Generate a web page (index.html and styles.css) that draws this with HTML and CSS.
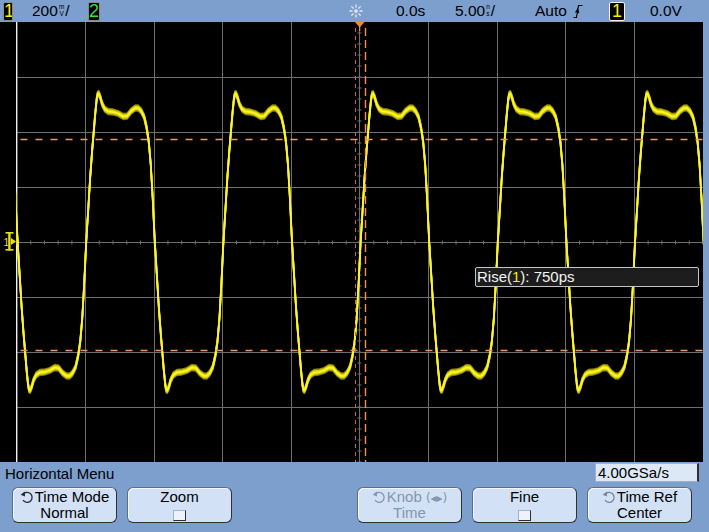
FILE: index.html
```html
<!DOCTYPE html>
<html lang="en">
<head>
<meta charset="utf-8">
<title>Horizontal Menu</title>
<link rel="stylesheet" href="styles.css">
</head>
<body>
<div class="scope">
  <header class="status">
    <div class="cell"><span class="chan chan-1">1</span></div>
    <div class="cell"><span class="val">200<span class="unit"><span>m</span><span>V</span></span>/</span></div>
    <div class="cell"><span class="chan chan-2">2</span></div>
    <div class="cell">
      <svg class="run-icon" width="14" height="16" viewBox="0 0 14 16">
        <path d="M7 1.5V4.5M7 11.5V14.5M0.5 8H3.5M10.5 8H13.5M2.4 3.4L4.5 5.5M9.5 10.5L11.6 12.6M11.6 3.4L9.5 5.5M4.5 10.5L2.4 12.6" />
        <circle cx="7" cy="8" r="1.2" />
      </svg>
    </div>
    <div class="cell"><span class="val">0.0s</span></div>
    <div class="cell"><span class="val">5.00<span class="unit"><span>n</span><span>s</span></span>/</span></div>
    <div class="cell"><span class="val">Auto</span></div>
    <div class="cell">
      <svg class="slope-icon" width="10" height="15" viewBox="0 0 10 15">
        <path d="M0.5 13.5H3.5L5.5 1.5H9.5" />
        <path d="M2.6 8.6L4.6 5.4L5.8 9" />
      </svg>
    </div>
    <div class="cell"><span class="chan chan-1 chan-sel">1</span></div>
    <div class="cell"><span class="val">0.0V</span></div>
  </header>

  <div class="middle">
    <div class="gutter">
      <svg class="gnd-marker" width="16" height="20" viewBox="0 0 16 20">
        <rect x="5.5" y="0" width="8" height="1.6" />
        <rect x="8.2" y="0" width="2.4" height="18.5" />
        <rect x="5.5" y="17" width="8" height="1.6" />
        <text x="3.6" y="14.2">1</text>
        <path d="M11 6L16 9.5L11 13Z" />
      </svg>
    </div>

    <div class="screen">
      <svg class="grid" width="687" height="440" viewBox="0 0 687 440">
        <defs>
          <polyline id="period" points="0,220 2,252 4,285 6,312 7.5,330 9,348 10.5,363 11.5,368 12.5,368.5 14,365 16,358 18.5,353 22,350.5 27,350 32,348.5 37,345.5 41,346 45,351 49,354 52,354 55,351 58,345 60.5,334 62.6,320 64.6,297 66.6,262 68.6,220 70.6,188 72.6,155 74.6,128 76.1,110 77.6,92 79.1,77 80.1,72 81.1,71.5 82.6,75 84.6,82 87.1,87 90.6,89.5 95.6,90 100.6,91.5 105.6,94.5 109.6,94 113.6,89 117.6,86 120.6,86 123.6,89 126.6,95 129.1,106 131.2,120 133.2,143 135.2,178 137.2,220" />
          <g id="trace">
            <use href="#period" x="-135.6" />
            <use href="#period" x="1.6" />
            <use href="#period" x="138.8" />
            <use href="#period" x="276" />
            <use href="#period" x="413.2" />
            <use href="#period" x="550.4" />
          </g>
        </defs>

        <path class="gridline" d="M69.5 0V440M138.5 0V440M206.5 0V440M275.5 0V440M343.5 0V440M412.5 0V440M481.5 0V440M549.5 0V440M618.5 0V440M1 55.5H687M1 110.5H687M1 165.5H687M1 220.5H687M1 275.5H687M1 330.5H687M1 385.5H687" />
        <line class="ticks-h" x1="0.5" y1="220.5" x2="687" y2="220.5" />
        <line class="ticks-v" x1="343.5" y1="-0.5" x2="343.5" y2="440" />
        <rect class="edge" x="0" y="0" width="1.4" height="440" />

        <use class="tr tr-3" href="#trace" y="-3" />
        <use class="tr tr-3" href="#trace" y="3" />
        <use class="tr tr-2" href="#trace" y="-2" />
        <use class="tr tr-2" href="#trace" y="2" />
        <use class="tr tr-1" href="#trace" y="-1" />
        <use class="tr tr-1" href="#trace" y="1" />
        <use class="tr tr-0" href="#trace" />

        <line class="lvl" x1="4.5" y1="117.5" x2="687" y2="117.5" />
        <line class="lvl" x1="4.5" y1="328.5" x2="687" y2="328.5" />
        <line class="tmark-a" x1="339.5" y1="6" x2="339.5" y2="440" />
        <line class="tmark-b" x1="349.5" y1="6" x2="349.5" y2="440" />
        <path class="trig" d="M339 0H348.5L343.7 5.5Z" />
        <line class="trig-stem" x1="343.7" y1="4" x2="343.7" y2="9" />
      </svg>

      <div class="readout">Rise(<span class="c1">1</span>): 750ps</div>
    </div>

    <div class="frame-right"></div>
  </div>

  <footer class="menu">
    <div class="menu-head">
      <span class="menu-title">Horizontal Menu</span>
      <span class="rate">4.00GSa/s</span>
    </div>
    <div class="buttons">
      <div class="softkey">
        <span class="line"><svg class="knob knob-active" width="14" height="14" viewBox="0 0 14 14"><path d="M3.2 4.2A5 5 0 1 1 3 10.2" /><path class="head" d="M0.6 4.8L4.8 1.6L5 6.4Z" /></svg>Time Mode</span>
        <span class="line">Normal</span>
      </div>
      <div class="softkey">
        <span class="line">Zoom</span>
        <span class="check"></span>
      </div>
      <div class="slot"></div>
      <div class="softkey softkey-off">
        <span class="line"><svg class="knob" width="14" height="14" viewBox="0 0 14 14"><path d="M3.2 4.2A5 5 0 1 1 3 10.2" /><path class="head" d="M0.6 4.8L4.8 1.6L5 6.4Z" /></svg>Knob <span class="arrows">(◂▸)</span></span>
        <span class="line">Time</span>
      </div>
      <div class="softkey">
        <span class="line">Fine</span>
        <span class="check"></span>
      </div>
      <div class="softkey">
        <span class="line"><svg class="knob knob-dim" width="14" height="14" viewBox="0 0 14 14"><path d="M3.2 4.2A5 5 0 1 1 3 10.2" /><path class="head" d="M0.6 4.8L4.8 1.6L5 6.4Z" /></svg>Time Ref</span>
        <span class="line">Center</span>
      </div>
    </div>
  </footer>
</div>
</body>
</html>
```

FILE: styles.css
```css
* {
  box-sizing: border-box;
}

html,
body {
  margin: 0;
  padding: 0;
}

body {
  width: 709px;
  height: 532px;
  overflow: hidden;
  background: #000;
  font-family: "Liberation Sans", Arial, sans-serif;
  color: #000;
}

.scope {
  display: flex;
  flex-direction: column;
  width: 709px;
  height: 532px;
}

/* ---------- status bar ---------- */
.status {
  height: 22px;
  background: #7c9fce;
  display: grid;
  grid-template-columns: 29px 56px 261px 47px 59px 80px 38px 36px 41px 1fr;
  padding-left: 3px;
  font-size: 15.5px;
  line-height: 22px;
}

.cell {
  display: flex;
  align-items: center;
  height: 22px;
  white-space: nowrap;
}

.chan {
  display: block;
  width: 10px;
  height: 19px;
  background: #000;
  border: 1px solid #8a8a8a;
  border-radius: 2px;
  font-size: 18px;
  line-height: 17px;
  text-align: center;
  overflow: hidden;
}

.chan-1 {
  color: #f4ee1a;
}

.chan-2 {
  width: 12px;
  color: #38dc48;
}

.chan-sel {
  width: 16px;
  border-color: #f2f2f2;
}

.val {
  display: inline-block;
}

.unit {
  display: inline-block;
  font-size: 6.5px;
  line-height: 7.5px;
  text-align: center;
  margin: 0 1px;
}

.unit span {
  display: block;
}

.run-icon {
  display: block;
  stroke: #e9e9e9;
  stroke-width: 1.3;
  fill: #d8d8d8;
}

.slope-icon {
  display: block;
  fill: none;
  stroke: #000;
  stroke-width: 1.2;
}

/* ---------- scope screen ---------- */
.middle {
  display: flex;
  height: 440px;
}

.gutter {
  width: 16px;
  background: #000;
  display: flex;
  align-items: center;
}

.gnd-marker {
  display: block;
  fill: #e6df12;
}

.gnd-marker text {
  font-family: "Liberation Sans", Arial, sans-serif;
  font-size: 10px;
  fill: #e6df12;
}

.screen {
  position: relative;
  width: 687px;
  height: 440px;
  background: #000;
}

.grid {
  display: block;
}

.gridline {
  stroke: #6e6e6e;
  stroke-width: 1;
  fill: none;
}

.ticks-h {
  stroke: #707070;
  stroke-width: 4;
  stroke-dasharray: 1 12.72;
}

.ticks-v {
  stroke: #707070;
  stroke-width: 4;
  stroke-dasharray: 1 10;
}

.edge {
  fill: #f0f0f0;
}

.tr {
  fill: none;
  stroke-linejoin: round;
  stroke-linecap: round;
}

.tr-3 {
  stroke: #7e7800;
  stroke-width: 1.3;
}

.tr-2 {
  stroke: #b8b000;
  stroke-width: 1.6;
}

.tr-1 {
  stroke: #e2da00;
  stroke-width: 1.8;
}

.tr-0 {
  stroke: #fbf63a;
  stroke-width: 1.6;
}

.lvl {
  stroke: #ea9868;
  stroke-width: 1.4;
  stroke-dasharray: 7 8;
}

.tmark-a {
  stroke: #c86a2c;
  stroke-width: 1;
  stroke-dasharray: 4 4;
}

.tmark-b {
  stroke: #f39150;
  stroke-width: 1.4;
  stroke-dasharray: 8 4;
}

.trig {
  fill: #f08a30;
}

.trig-stem {
  stroke: #f08a30;
  stroke-width: 1.2;
}

.readout {
  position: absolute;
  left: 459px;
  top: 245px;
  width: 224px;
  height: 20px;
  background: #1d1d1d;
  border: 1px solid #c4c4c4;
  border-radius: 2px;
  color: #f4f4f4;
  font-size: 15px;
  line-height: 18px;
  padding-left: 1px;
  white-space: nowrap;
}

.readout .c1 {
  color: #f2ec1a;
}

.frame-right {
  flex: 1;
  background: #7c9fce;
}

/* ---------- softkey menu ---------- */
.menu {
  flex: 1;
  background: #7c9fce;
  padding-top: 1px;
}

.menu-head {
  display: flex;
  justify-content: space-between;
  align-items: flex-start;
  height: 20px;
}

.menu-title {
  padding-left: 5px;
  padding-top: 2px;
  font-size: 15px;
  line-height: 18px;
}

.rate {
  width: 104px;
  height: 19px;
  margin-right: 10px;
  background: #dde8f7;
  border: 1px solid #9fb0c8;
  border-right: 2px solid #2f2f2f;
  font-size: 15px;
  line-height: 17px;
  padding-left: 2px;
}

.buttons {
  display: flex;
  gap: 10px;
  padding-left: 12px;
  margin-top: 4px;
}

.slot {
  width: 105px;
}

.softkey {
  width: 105px;
  height: 36px;
  background: #d2e1f5;
  border: 1px solid #5f6e86;
  border-right-color: #303030;
  border-bottom-color: #303030;
  border-radius: 6px;
  box-shadow: inset 1px 1px 0 #f3f7fd;
  padding-top: 1px;
  font-size: 15px;
  line-height: 16px;
  text-align: center;
  white-space: nowrap;
}

.softkey .line {
  display: block;
  height: 16px;
}

.softkey-off {
  color: #8595ae;
}

.knob {
  display: inline-block;
  vertical-align: -2px;
  margin-right: 1px;
  fill: none;
  stroke: #8595ae;
  stroke-width: 1.3;
}

.knob .head {
  fill: #8595ae;
  stroke: none;
}

.knob-active {
  stroke: #2a2a2a;
}

.knob-active .head {
  fill: #2a2a2a;
}

.knob-dim {
  stroke: #74859f;
}

.knob-dim .head {
  fill: #74859f;
}

.arrows {
  font-size: 12px;
  font-family: "DejaVu Sans", "Liberation Sans", sans-serif;
}

.check {
  display: block;
  width: 13px;
  height: 11px;
  margin: 5px auto 0;
  background: #eef3fb;
  border: 1px solid;
  border-color: #a6b3c6 #2f2f2f #2f2f2f #a6b3c6;
}
```
